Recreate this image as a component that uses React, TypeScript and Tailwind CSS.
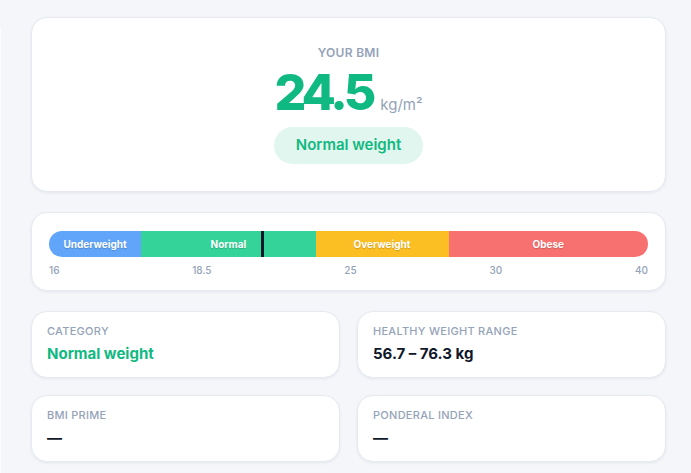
import React from "react";

const segments = [
  { label: "Underweight", width: "15.4%", cls: "bg-[#60a5fa] rounded-l-full" },
  { label: "Normal", width: "29.1%", cls: "bg-[#34d399]" },
  { label: "Overweight", width: "22.2%", cls: "bg-[#fbbf24]" },
  { label: "Obese", width: "33.3%", cls: "bg-[#f87171] rounded-r-full" },
];

const ticks = ["16", "18.5", "25", "30", "40"];

function StatCard({ label, value, valueCls }: { label: string; value: string; valueCls: string }) {
  return (
    <div className="bg-white rounded-2xl border border-[#e6eaf0] shadow-[0_1px_3px_rgba(15,23,42,0.07)] px-[15px] pt-[11px] pb-3 h-[67px]">
      <div className="text-[11px] leading-4 font-medium tracking-wide uppercase text-[#94a3b8]">{label}</div>
      <div className={`mt-[3px] text-[15px] leading-6 font-bold ${valueCls}`}>{value}</div>
    </div>
  );
}

export default function App() {
  return (
    <div
      className="min-h-screen bg-[#f4f6fa] flex"
      style={{ fontFamily: "Inter, 'Noto Sans', sans-serif" }}
    >
      <div className="w-px mt-[27px] bg-[#fbfcfe]" />
      <div className="ml-[30px] w-[635px] pt-[17px] flex flex-col">
        {/* BMI hero card */}
        <div className="bg-white rounded-2xl border border-[#e6eaf0] shadow-[0_1px_3px_rgba(15,23,42,0.07)] h-[175px] pt-[27px] flex flex-col items-center">
          <div className="text-xs leading-4 font-semibold tracking-wide uppercase text-[#94a3b8]">Your BMI</div>
          <div className="mt-[6px] flex items-baseline">
            <span className="text-[50px] leading-none font-extrabold tracking-[-0.08em] text-[#10b981]">24.5</span>
            <span className="ml-[8px] text-[15px] text-[#94a3b8]">kg/m²</span>
          </div>
          <div className="mt-[10px] h-[37px] px-[22px] rounded-full bg-[#e0f6ee] flex items-center text-[15px] font-semibold text-[#10b981]">
            Normal weight
          </div>
        </div>

        {/* Scale card */}
        <div className="mt-5 bg-white rounded-2xl border border-[#e6eaf0] shadow-[0_1px_3px_rgba(15,23,42,0.07)] h-[79px] px-[17px] pt-[18px]">
          <div className="relative h-[26px] flex rounded-full">
            {segments.map((s) => (
              <div
                key={s.label}
                className={`h-full flex items-center justify-center text-[10px] font-bold text-white [text-shadow:0_1px_1px_rgba(0,0,0,0.18)] ${s.cls}`}
                style={{ width: s.width }}
              >
                {s.label}
              </div>
            ))}
            <div className="absolute top-0 h-full w-[3px] bg-[#0f172a] left-[212px]" />
          </div>
          <div className="mt-[6px] flex justify-between text-[10px] leading-[14px] font-medium text-[#94a3b8]">
            {ticks.map((t) => (
              <span key={t}>{t}</span>
            ))}
          </div>
        </div>

        {/* Stats grid */}
        <div className="mt-5 grid grid-cols-2 gap-[17px]">
          <StatCard label="Category" value="Normal weight" valueCls="text-[#10b981]" />
          <StatCard label="Healthy weight range" value="56.7 – 76.3 kg" valueCls="text-[#0f172a]" />
          <StatCard label="BMI Prime" value="—" valueCls="text-[#0f172a]" />
          <StatCard label="Ponderal index" value="—" valueCls="text-[#0f172a]" />
        </div>
      </div>
    </div>
  );
}
